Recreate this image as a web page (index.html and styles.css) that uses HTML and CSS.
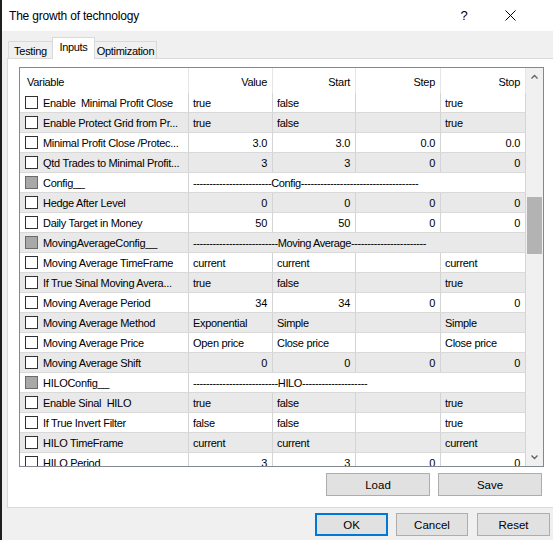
FILE: index.html
```html
<!DOCTYPE html>
<html lang="en">
<head>
    <meta charset="UTF-8">
    <title>The growth of technology</title>
    <link rel="stylesheet" href="styles.css">
</head>
<body>
<div class="window">
    <div class="titlebar">
        <span class="title">The growth of technology</span>
        <span class="caption-btn help">?</span>
        <span class="caption-btn close">
            <svg width="11" height="11" viewBox="0 0 11 11"><path d="M0.5 0.5 L10.5 10.5 M10.5 0.5 L0.5 10.5" stroke="#000" stroke-width="1" fill="none"/></svg>
        </span>
    </div>

    <div class="tabs">
        <div class="tab tab-testing">Testing</div>
        <div class="tab tab-inputs active">Inputs</div>
        <div class="tab tab-opt">Optimization</div>
    </div>

    <div class="panel">
        <div class="grid">
            <div class="grid-table">
                <div class="row header">
                    <div class="cell">Variable</div>
                    <div class="cell num">Value</div>
                    <div class="cell num">Start</div>
                    <div class="cell num">Step</div>
                    <div class="cell num">Stop</div>
                </div>

                <div class="row">
                    <div class="cell var"><span class="check"></span>Enable  Minimal Profit Close</div>
                    <div class="cell">true</div>
                    <div class="cell">false</div>
                    <div class="cell"></div>
                    <div class="cell">true</div>
                </div>
                <div class="row alt">
                    <div class="cell var"><span class="check"></span>Enable Protect Grid from Pr...</div>
                    <div class="cell">true</div>
                    <div class="cell">false</div>
                    <div class="cell"></div>
                    <div class="cell">true</div>
                </div>
                <div class="row">
                    <div class="cell var"><span class="check"></span>Minimal Profit Close /Protec...</div>
                    <div class="cell num">3.0</div>
                    <div class="cell num">3.0</div>
                    <div class="cell num">0.0</div>
                    <div class="cell num">0.0</div>
                </div>
                <div class="row alt">
                    <div class="cell var"><span class="check"></span>Qtd Trades to Minimal Profit...</div>
                    <div class="cell num">3</div>
                    <div class="cell num">3</div>
                    <div class="cell num">0</div>
                    <div class="cell num">0</div>
                </div>
                <div class="row group">
                    <div class="cell var"><span class="check off"></span>Config__</div>
                    <div class="cell span">------------------------Config------------------------------------</div>
                </div>
                <div class="row alt">
                    <div class="cell var"><span class="check"></span>Hedge After Level</div>
                    <div class="cell num">0</div>
                    <div class="cell num">0</div>
                    <div class="cell num">0</div>
                    <div class="cell num">0</div>
                </div>
                <div class="row">
                    <div class="cell var"><span class="check"></span>Daily Target in Money</div>
                    <div class="cell num">50</div>
                    <div class="cell num">50</div>
                    <div class="cell num">0</div>
                    <div class="cell num">0</div>
                </div>
                <div class="row alt group">
                    <div class="cell var"><span class="check off"></span>MovingAverageConfig__</div>
                    <div class="cell span">--------------------------Moving Average-----------------------</div>
                </div>
                <div class="row">
                    <div class="cell var"><span class="check"></span>Moving Average TimeFrame</div>
                    <div class="cell">current</div>
                    <div class="cell">current</div>
                    <div class="cell"></div>
                    <div class="cell">current</div>
                </div>
                <div class="row alt">
                    <div class="cell var"><span class="check"></span>If True Sinal Moving Avera...</div>
                    <div class="cell">true</div>
                    <div class="cell">false</div>
                    <div class="cell"></div>
                    <div class="cell">true</div>
                </div>
                <div class="row">
                    <div class="cell var"><span class="check"></span>Moving Average Period</div>
                    <div class="cell num">34</div>
                    <div class="cell num">34</div>
                    <div class="cell num">0</div>
                    <div class="cell num">0</div>
                </div>
                <div class="row alt">
                    <div class="cell var"><span class="check"></span>Moving Average Method</div>
                    <div class="cell">Exponential</div>
                    <div class="cell">Simple</div>
                    <div class="cell"></div>
                    <div class="cell">Simple</div>
                </div>
                <div class="row">
                    <div class="cell var"><span class="check"></span>Moving Average Price</div>
                    <div class="cell">Open price</div>
                    <div class="cell">Close price</div>
                    <div class="cell"></div>
                    <div class="cell">Close price</div>
                </div>
                <div class="row alt">
                    <div class="cell var"><span class="check"></span>Moving Average Shift</div>
                    <div class="cell num">0</div>
                    <div class="cell num">0</div>
                    <div class="cell num">0</div>
                    <div class="cell num">0</div>
                </div>
                <div class="row group">
                    <div class="cell var"><span class="check off"></span>HILOConfig__</div>
                    <div class="cell span">--------------------------HILO--------------------</div>
                </div>
                <div class="row alt">
                    <div class="cell var"><span class="check"></span>Enable Sinal  HILO</div>
                    <div class="cell">true</div>
                    <div class="cell">false</div>
                    <div class="cell"></div>
                    <div class="cell">true</div>
                </div>
                <div class="row">
                    <div class="cell var"><span class="check"></span>If True Invert Filter</div>
                    <div class="cell">false</div>
                    <div class="cell">false</div>
                    <div class="cell"></div>
                    <div class="cell">true</div>
                </div>
                <div class="row alt">
                    <div class="cell var"><span class="check"></span>HILO TimeFrame</div>
                    <div class="cell">current</div>
                    <div class="cell">current</div>
                    <div class="cell"></div>
                    <div class="cell">current</div>
                </div>
                <div class="row">
                    <div class="cell var"><span class="check"></span>HILO Period</div>
                    <div class="cell num">3</div>
                    <div class="cell num">3</div>
                    <div class="cell num">0</div>
                    <div class="cell num">0</div>
                </div>
            </div>

            <div class="scrollbar">
                <div class="sb-arrow">
                    <svg width="7" height="5" viewBox="0 0 7 5"><polyline points="0.5,4.5 3.5,1.5 6.5,4.5" fill="none" stroke="#606060" stroke-width="1.3"/></svg>
                </div>
                <div class="sb-thumb"></div>
                <div class="sb-track"></div>
                <div class="sb-arrow">
                    <svg width="7" height="5" viewBox="0 0 7 5"><polyline points="0.5,0.5 3.5,3.5 6.5,0.5" fill="none" stroke="#606060" stroke-width="1.3"/></svg>
                </div>
            </div>
        </div>

        <div class="panel-buttons">
            <button class="btn wide">Load</button>
            <button class="btn wide">Save</button>
        </div>
    </div>

    <div class="dialog-buttons">
        <button class="btn default">OK</button>
        <button class="btn cancel">Cancel</button>
        <button class="btn">Reset</button>
    </div>
</div>
</body>
</html>
```

FILE: styles.css
```css
html, body {
    margin: 0;
    padding: 0;
    overflow: hidden;
    background-color: #f0f0f0;
    font-family: "Liberation Sans", Arial, sans-serif;
    color: #000;
}

.window {
    height: 540px;
    border-left: 2px solid #1f1f1f;
    background-color: #f0f0f0;
}

/* title bar */
.titlebar {
    height: 31px;
    background-color: #fff;
    display: flex;
    align-items: center;
    padding-right: 20px;
}
.title {
    padding-left: 7px;
    font-size: 12px;
    letter-spacing: -0.2px;
}
.caption-btn {
    width: 46px;
    height: 31px;
    display: flex;
    align-items: center;
    justify-content: center;
    font-size: 13px;
}
.help {
    margin-left: auto;
}

/* tabs */
.tabs {
    display: flex;
    align-items: flex-end;
    height: 27px;
    padding-left: 6px;
}
.tab {
    box-sizing: border-box;
    height: 17px;
    border: 1px solid #d9d9d9;
    border-bottom: none;
    background-color: #f0f0f0;
    font-size: 11px;
    letter-spacing: -0.3px;
    display: flex;
    align-items: center;
    justify-content: center;
    padding-top: 1px;
}
.tab-testing {
    width: 45px;
}
.tab-inputs {
    width: 43px;
    margin-left: -1px;
}
.tab-opt {
    width: 63px;
    margin-left: -1px;
}
.tab.active {
    height: 22px;
    margin-bottom: -1px;
    padding-top: 0;
    padding-bottom: 4px;
    background-color: #fff;
    position: relative;
    z-index: 1;
}

/* tab page */
.panel {
    box-sizing: border-box;
    height: 450px;
    margin-left: 5px;
    padding: 8px 0 0 11px;
    border: 1px solid #d9d9d9;
    border-right: none;
    background-color: #fff;
}

.grid {
    box-sizing: border-box;
    width: 525px;
    height: 400px;
    border: 1px solid #828790;
    display: flex;
    background-color: #fff;
}
.grid-table {
    width: 506px;
    overflow: hidden;
}
.row {
    box-sizing: border-box;
    display: grid;
    grid-template-columns: 169px 84px 83px 85px 85px;
    height: 20px;
    border-bottom: 1px solid #d9d9d9;
    background-color: #fff;
}
.row.alt {
    background-color: #e9e9e9;
}
.row.header {
    height: 25px;
    border-bottom: none;
}
.row.header .cell {
    border-right-color: #e6e6e6;
    padding-top: 3px;
}
.cell {
    box-sizing: border-box;
    border-right: 1px solid #d4d4d4;
    padding: 1px 4px 0 4px;
    display: flex;
    align-items: center;
    font-size: 11px;
    letter-spacing: -0.3px;
    white-space: pre;
    overflow: hidden;
}
.cell.num {
    justify-content: flex-end;
    padding-right: 5px;
}
.cell.var {
    padding-left: 5px;
}
.cell.span {
    grid-column: 2 / 6;
    letter-spacing: -0.4px;
}
.header .cell:first-child {
    padding-left: 7px;
}

.check {
    box-sizing: border-box;
    flex: none;
    width: 13px;
    height: 13px;
    margin-top: -1px;
    margin-right: 5px;
    border: 1px solid #333;
    background-color: #fff;
}
.check.off {
    border-color: #6a6a6a;
    background-color: #a8a8a8;
}

/* scrollbar */
.scrollbar {
    width: 17px;
    background-color: #f0f0f0;
    display: flex;
    flex-direction: column;
    align-items: center;
}
.sb-arrow {
    width: 17px;
    height: 17px;
    display: flex;
    align-items: center;
    justify-content: center;
}
.sb-thumb {
    width: 15px;
    height: 57px;
    margin-top: 112px;
    background-color: #b3b3b3;
}
.sb-track {
    flex: 1;
}

/* buttons */
.btn {
    box-sizing: border-box;
    height: 23px;
    width: 73px;
    border: 1px solid #adadad;
    background-color: #e1e1e1;
    font-family: "Liberation Sans", Arial, sans-serif;
    font-size: 11.5px;
    color: #000;
    padding: 0;
}
.btn.wide {
    width: 104px;
}
.btn.default {
    border: 2px solid #0078d7;
}

.panel-buttons {
    width: 523px;
    margin-top: 6px;
    display: flex;
    justify-content: flex-end;
    gap: 8px;
}

.dialog-buttons {
    display: flex;
    justify-content: flex-end;
    gap: 9px;
    margin-top: 5px;
    padding-right: 3px;
}
.dialog-buttons .cancel {
    width: 72px;
    margin-left: -1px;
}
```
